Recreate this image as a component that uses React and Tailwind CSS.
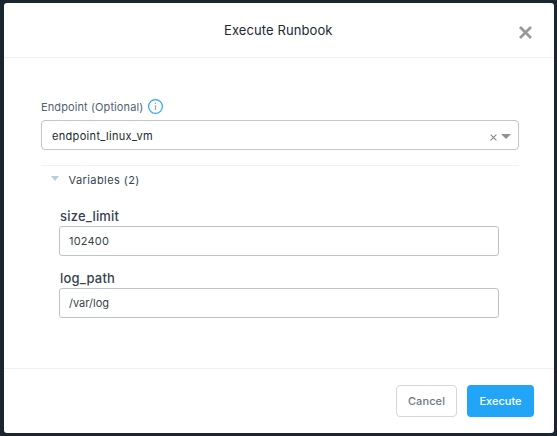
import React from "react";

function Field({ label, value, valueClass, className }) {
  return (
    <label className={`block ${className}`}>
      <span className="block h-[21px] pl-px text-[13px] leading-[22px] font-medium tracking-[0.2px] text-[#36424f]">
        {label}
      </span>
      <span className="flex h-[30px] items-center rounded-[3px] border border-[#bcc3c9] pl-[9px] text-[11px] text-[#3a3f45]">
        <span className={valueClass}>{value}</span>
      </span>
    </label>
  );
}

export default function App() {
  return (
    <div className="h-[436px] w-[557px] overflow-hidden bg-[#1b2530] pt-[3px] pl-1 font-['Inter',sans-serif]">
      <section className="flex h-[430px] w-[550px] flex-col rounded-[3px] bg-white">
        <header className="flex h-[55px] shrink-0 items-center justify-between border-b border-[#f0f1f2] pr-[22px] pl-[220px]">
          <h1 className="whitespace-nowrap text-[13px] leading-5 tracking-[0.1px] text-[#22272e]">Execute Runbook</h1>
          <svg className="mt-1 size-[13px]" viewBox="0 0 13 13" stroke="#999999" strokeWidth="2.8">
            <path d="M1 1 12 12M12 1 1 12" />
          </svg>
        </header>

        <main className="flex-1 pr-[35px] pl-[37px]">
          <div className="mt-[41px] flex h-[15px] items-center text-[11px] text-[#536170]">
            <span className="w-[107px] pt-px whitespace-nowrap tracking-[0.1px]">Endpoint (Optional)</span>
            <svg className="size-[15px]" viewBox="0 0 15 15" fill="none" stroke="#2ba3f5">
              <circle cx="7.5" cy="7.5" r="6.9" strokeWidth="1.2" />
              <path d="M7.5 6.2V11M7.5 3.8V5" stroke="#74a9e8" strokeWidth="1.2" />
            </svg>
          </div>
          <div className="mt-[6px] flex h-[30px] items-center rounded-[4px] border border-[#c3c5c7] pr-[7px] pl-[10px] text-[11px] text-[#22272e]">
            <span className="flex-1 pt-[2px] tracking-[0.32px]">endpoint_linux_vm</span>
            <svg className="mt-[5px] h-[7px] w-[7px]" viewBox="0 0 7 7" stroke="#858585" strokeWidth="1.1">
              <path d="M.6.6 6.4 6.4M6.4.6.6 6.4" />
            </svg>
            <svg className="mt-[2px] ml-1 h-[5px] w-[10px]" viewBox="0 0 10 5" fill="#929292">
              <path d="M0 0H10L5 5Z" />
            </svg>
          </div>
          <div className="mt-[15px] flex h-[30px] items-center border-t border-[#f0f1f2] pl-[10px] text-[11px] text-[#36424f]">
            <svg className="mb-1 h-[5px] w-2" viewBox="0 0 8 5" fill="#b6d0dc">
              <path d="M0 0H8L4 5Z" />
            </svg>
            <span className="ml-[9.5px] tracking-[0.42px]">Variables (2)</span>
          </div>
          <div className="pr-5 pl-[18px]">
            <Field className="mt-[10px]" label="size_limit" value="102400" valueClass="tracking-[0.2px]" />
            <Field className="mt-[11px]" label="log_path" value="/var/log" valueClass="tracking-normal" />
          </div>
        </main>

        <footer className="flex h-[65px] shrink-0 justify-end gap-[10px] border-t border-[#f0f1f2] pt-4 pr-5 text-[11px] font-medium">
          <button className="h-8 w-[61px] rounded-[4px] border border-[#d3d8dd] tracking-[0.1px] text-[#6f7780]">Cancel</button>
          <button className="h-8 w-[67px] rounded-[4px] bg-[#22a5f7] text-white">Execute</button>
        </footer>
      </section>
    </div>
  );
}
